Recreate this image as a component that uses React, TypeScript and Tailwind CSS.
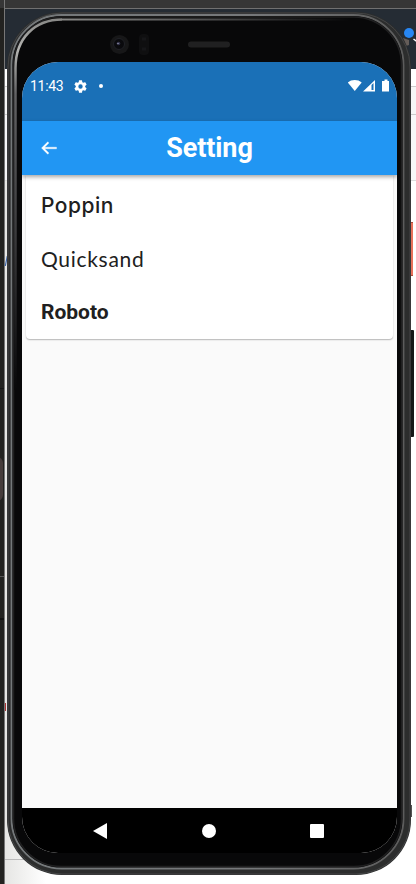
import React from "react";

function Desktop() {
  return (
    <div className="absolute inset-0 flex bg-white">
      <div className="relative w-[5px] shrink-0 overflow-hidden border-r border-[#777] bg-[#222220]">
        <div className="absolute top-0 h-2 w-full bg-[#363636]" />
        <div className="absolute -left-[9px] top-[457px] h-[44px] w-3 rounded-full bg-[#463c3b]" />
        <div className="absolute top-[388px] h-px w-full bg-[#151515]" />
        <div className="absolute top-[576px] h-px w-full bg-[#555]" />
        <div className="absolute top-[618px] h-[2px] w-full bg-[#111]" />
      </div>
      <div className="flex grow flex-col">
        <div className="h-2 bg-[#363636]" />
        <div className="h-px bg-[#707070]" />
        <div className="h-[60px] bg-[#252c34]" />
        <div className="h-[18px] border-b border-[#ccc] bg-white" />
        <div className="h-[28px] border-b border-[#ccc] bg-[#f6f6f6]" />
        <div className="h-[66px] border-b border-[#ddd] bg-[#f7f7f8]" />
        <div className="grow bg-gradient-to-r from-[#e6e6e4] via-white via-10% to-white" />
      </div>
    </div>
  );
}

function PhoneBody() {
  return (
    <svg className="absolute inset-0" width="416" height="884" viewBox="0 0 416 884">
      <defs>
        <linearGradient id="rim" x1="0" y1="0" x2="1" y2="0">
          <stop offset="0" stopColor="#74787a" />
          <stop offset=".6" stopColor="#77797b" />
          <stop offset="1" stopColor="#5c5c5c" />
        </linearGradient>
        <linearGradient id="shine" gradientUnits="userSpaceOnUse" x1="60" y1="19" x2="350" y2="19">
          <stop offset="0" stopColor="#8a8a88" />
          <stop offset=".4" stopColor="#5d5d5d" />
          <stop offset="1" stopColor="#080809" />
        </linearGradient>
        <linearGradient id="side" gradientUnits="userSpaceOnUse" x1="15" y1="20" x2="15" y2="390">
          <stop offset="0" stopColor="#8a8a88" />
          <stop offset=".08" stopColor="#b5b5b2" />
          <stop offset=".2" stopColor="#626264" />
          <stop offset=".6" stopColor="#38383a" />
          <stop offset="1" stopColor="#080809" />
        </linearGradient>
      </defs>
      <path d="M5 859.5H24" stroke="#bbb" />
      <path d="M5.3 266l2-10" stroke="#3b64a8" strokeWidth="1.2" />
      <path d="M5.5 703v8" stroke="#a33" />
      <path d="M413.5 39l4 3" stroke="#fff" strokeWidth="1.5" />
      <path d="M403 38l6 2v5l-3 1z" fill="#655d59" />
      <rect x="407" y="222" width="6" height="54" fill="#e8705a" />
      <path d="M410 222.5h3M410 275.5h3" stroke="#a94b3b" />
      <rect x="407" y="330" width="7" height="107" rx="1" fill="#161818" />
      <rect x="407" y="805" width="5" height="12" fill="#555" />
      <rect x="7" y="12" width="404" height="863" rx="55" fill="#2c2d2d" />
      <rect x="8" y="13" width="402" height="861" rx="54" fill="none" stroke="#444546" />
      <rect x="11.5" y="15" width="392" height="853.5" rx="50" fill="#080809" stroke="url(#rim)" strokeWidth="1.8" />
      <rect x="13.5" y="17" width="388" height="849.5" rx="48" fill="none" stroke="#202021" strokeWidth="1.5" />
      <path d="M15.5 390V68C15.5 38 35 19.5 62 19.5" fill="none" stroke="url(#side)" strokeWidth="2.5" />
      <path d="M62 18.5H350v2H62z" fill="url(#shine)" />
      <circle cx="119.5" cy="44.5" r="9.5" fill="#171718" />
      <circle cx="119" cy="44" r="5.5" fill="#0a0a0d" stroke="#202126" />
      <circle cx="118.5" cy="43.5" r="1.8" fill="#33334a" />
      <circle cx="118" cy="43.5" r=".6" fill="#c7c7df" />
      <rect x="139" y="34" width="10" height="21" rx="4" fill="#0f0f10" />
      <path d="M142 39h4M142 49h4" stroke="#161618" strokeWidth="3" />
      <rect x="188" y="41.5" width="42" height="6" rx="3" fill="#202021" />
      <circle cx="409" cy="33" r="5" fill="#2787f4" />
    </svg>
  );
}

function StatusBar() {
  return (
    <div className="flex h-[59px] shrink-0 items-start justify-between bg-[#1a70b7] pt-4 text-white">
      <div className="flex h-4 items-center pl-2">
        <span className="w-[34px] whitespace-nowrap text-[14px] leading-4 tracking-[-0.3px]">11:43</span>
        <svg className="ml-[9px]" width="15" height="15" viewBox="0 0 24 24" fill="currentColor">
          <path d="M19.43 12.98c.04-.32.07-.64.07-.98s-.03-.66-.07-.98l2.11-1.65a.5.5 0 0 0 .12-.64l-2-3.46a.5.5 0 0 0-.61-.22l-2.49 1a7.3 7.3 0 0 0-1.69-.98l-.38-2.65A.49.49 0 0 0 14 2h-4a.49.49 0 0 0-.49.42l-.38 2.65c-.61.25-1.17.59-1.69.98l-2.49-1a.49.49 0 0 0-.61.22l-2 3.46a.49.49 0 0 0 .12.64l2.11 1.65c-.04.32-.07.65-.07.98s.03.66.07.98l-2.11 1.65a.5.5 0 0 0-.12.64l2 3.46c.12.22.39.3.61.22l2.49-1c.52.4 1.08.73 1.69.98l.38 2.65c.03.24.24.42.49.42h4c.25 0 .46-.18.49-.42l.38-2.65a7.7 7.7 0 0 0 1.69-.98l2.49 1c.23.09.49 0 .61-.22l2-3.46a.5.5 0 0 0-.12-.64zM12 15.5a3.5 3.5 0 1 1 0-7 3.5 3.5 0 0 1 0 7z" />
        </svg>
        <span className="ml-[11px] size-1 rounded-full bg-white" />
      </div>
      <svg className="mr-[7px]" width="43" height="16" viewBox="0 0 43 16" fill="currentColor">
        <path d="M.8 4.5C4.500 1.2 11 1.2 14.7 4.5L7.750 13z" />
        <path fillRule="evenodd" d="M16 13.5 28 2v11.500zM24.500 7v5h2V5z" />
        <path d="M36 3h1.500V1.500h3V3H42v10.500h-7V3z" />
      </svg>
    </div>
  );
}

export default function App() {
  return (
    <main className="relative h-[884px] w-[416px] overflow-hidden font-['Roboto',sans-serif]">
      <Desktop />
      <PhoneBody />
      <div className="relative ml-[22px] flex h-[884px] w-[375px] flex-col pt-[62px] pb-[31px]">
        <div className="flex grow flex-col overflow-hidden rounded-[36px] bg-[#fafafa]">
          <StatusBar />
          <header className="relative z-10 grid h-[54px] shrink-0 grid-cols-[54px_1fr_54px] items-center bg-[#2196f3] text-white shadow-[0_2px_4px_rgba(0,0,0,0.35)]">
            <svg className="ml-[17px]" width="20" height="20" viewBox="0 0 24 24" fill="currentColor">
              <path d="M21 11H6.830l5.090-5.090L10.500 4.500 3 12l7.500 7.500 1.420-1.410L6.830 13H21z" stroke="currentColor" strokeWidth=".4" />
            </svg>
            <h1 className="text-center text-[27px] font-bold leading-8 tracking-[-0.1px]">Setting</h1>
          </header>
          <section className="mx-1 h-[164px] shrink-0 rounded-b-[4px] bg-white px-[15px] text-[#202020] shadow-[0_1px_1.5px_rgba(0,0,0,0.28)]">
            <p className="flex h-[57px] items-center pt-[4px] font-['Inter',sans-serif] text-[21px] font-medium tracking-[0.5px]">Poppin</p>
            <p className="flex h-[52px] items-center pt-[2px] font-['Lato',sans-serif] text-[21px] tracking-[0.7px]">Quicksand</p>
            <p className="flex h-[54px] items-center pt-[3px] text-[21px] font-bold">Roboto</p>
          </section>
          <div className="grow" />
          <nav className="flex h-[45px] shrink-0 items-center bg-black text-white">
            <svg className="ml-[71px]" width="14" height="16" viewBox="0 0 14 16" fill="currentColor"><path d="M0 8 14 0v16z" /></svg>
            <span className="ml-[95px] size-[14px] rounded-full bg-white" />
            <span className="ml-[94px] size-[14px] rounded-[1px] bg-white" />
          </nav>
        </div>
      </div>
    </main>
  );
}
